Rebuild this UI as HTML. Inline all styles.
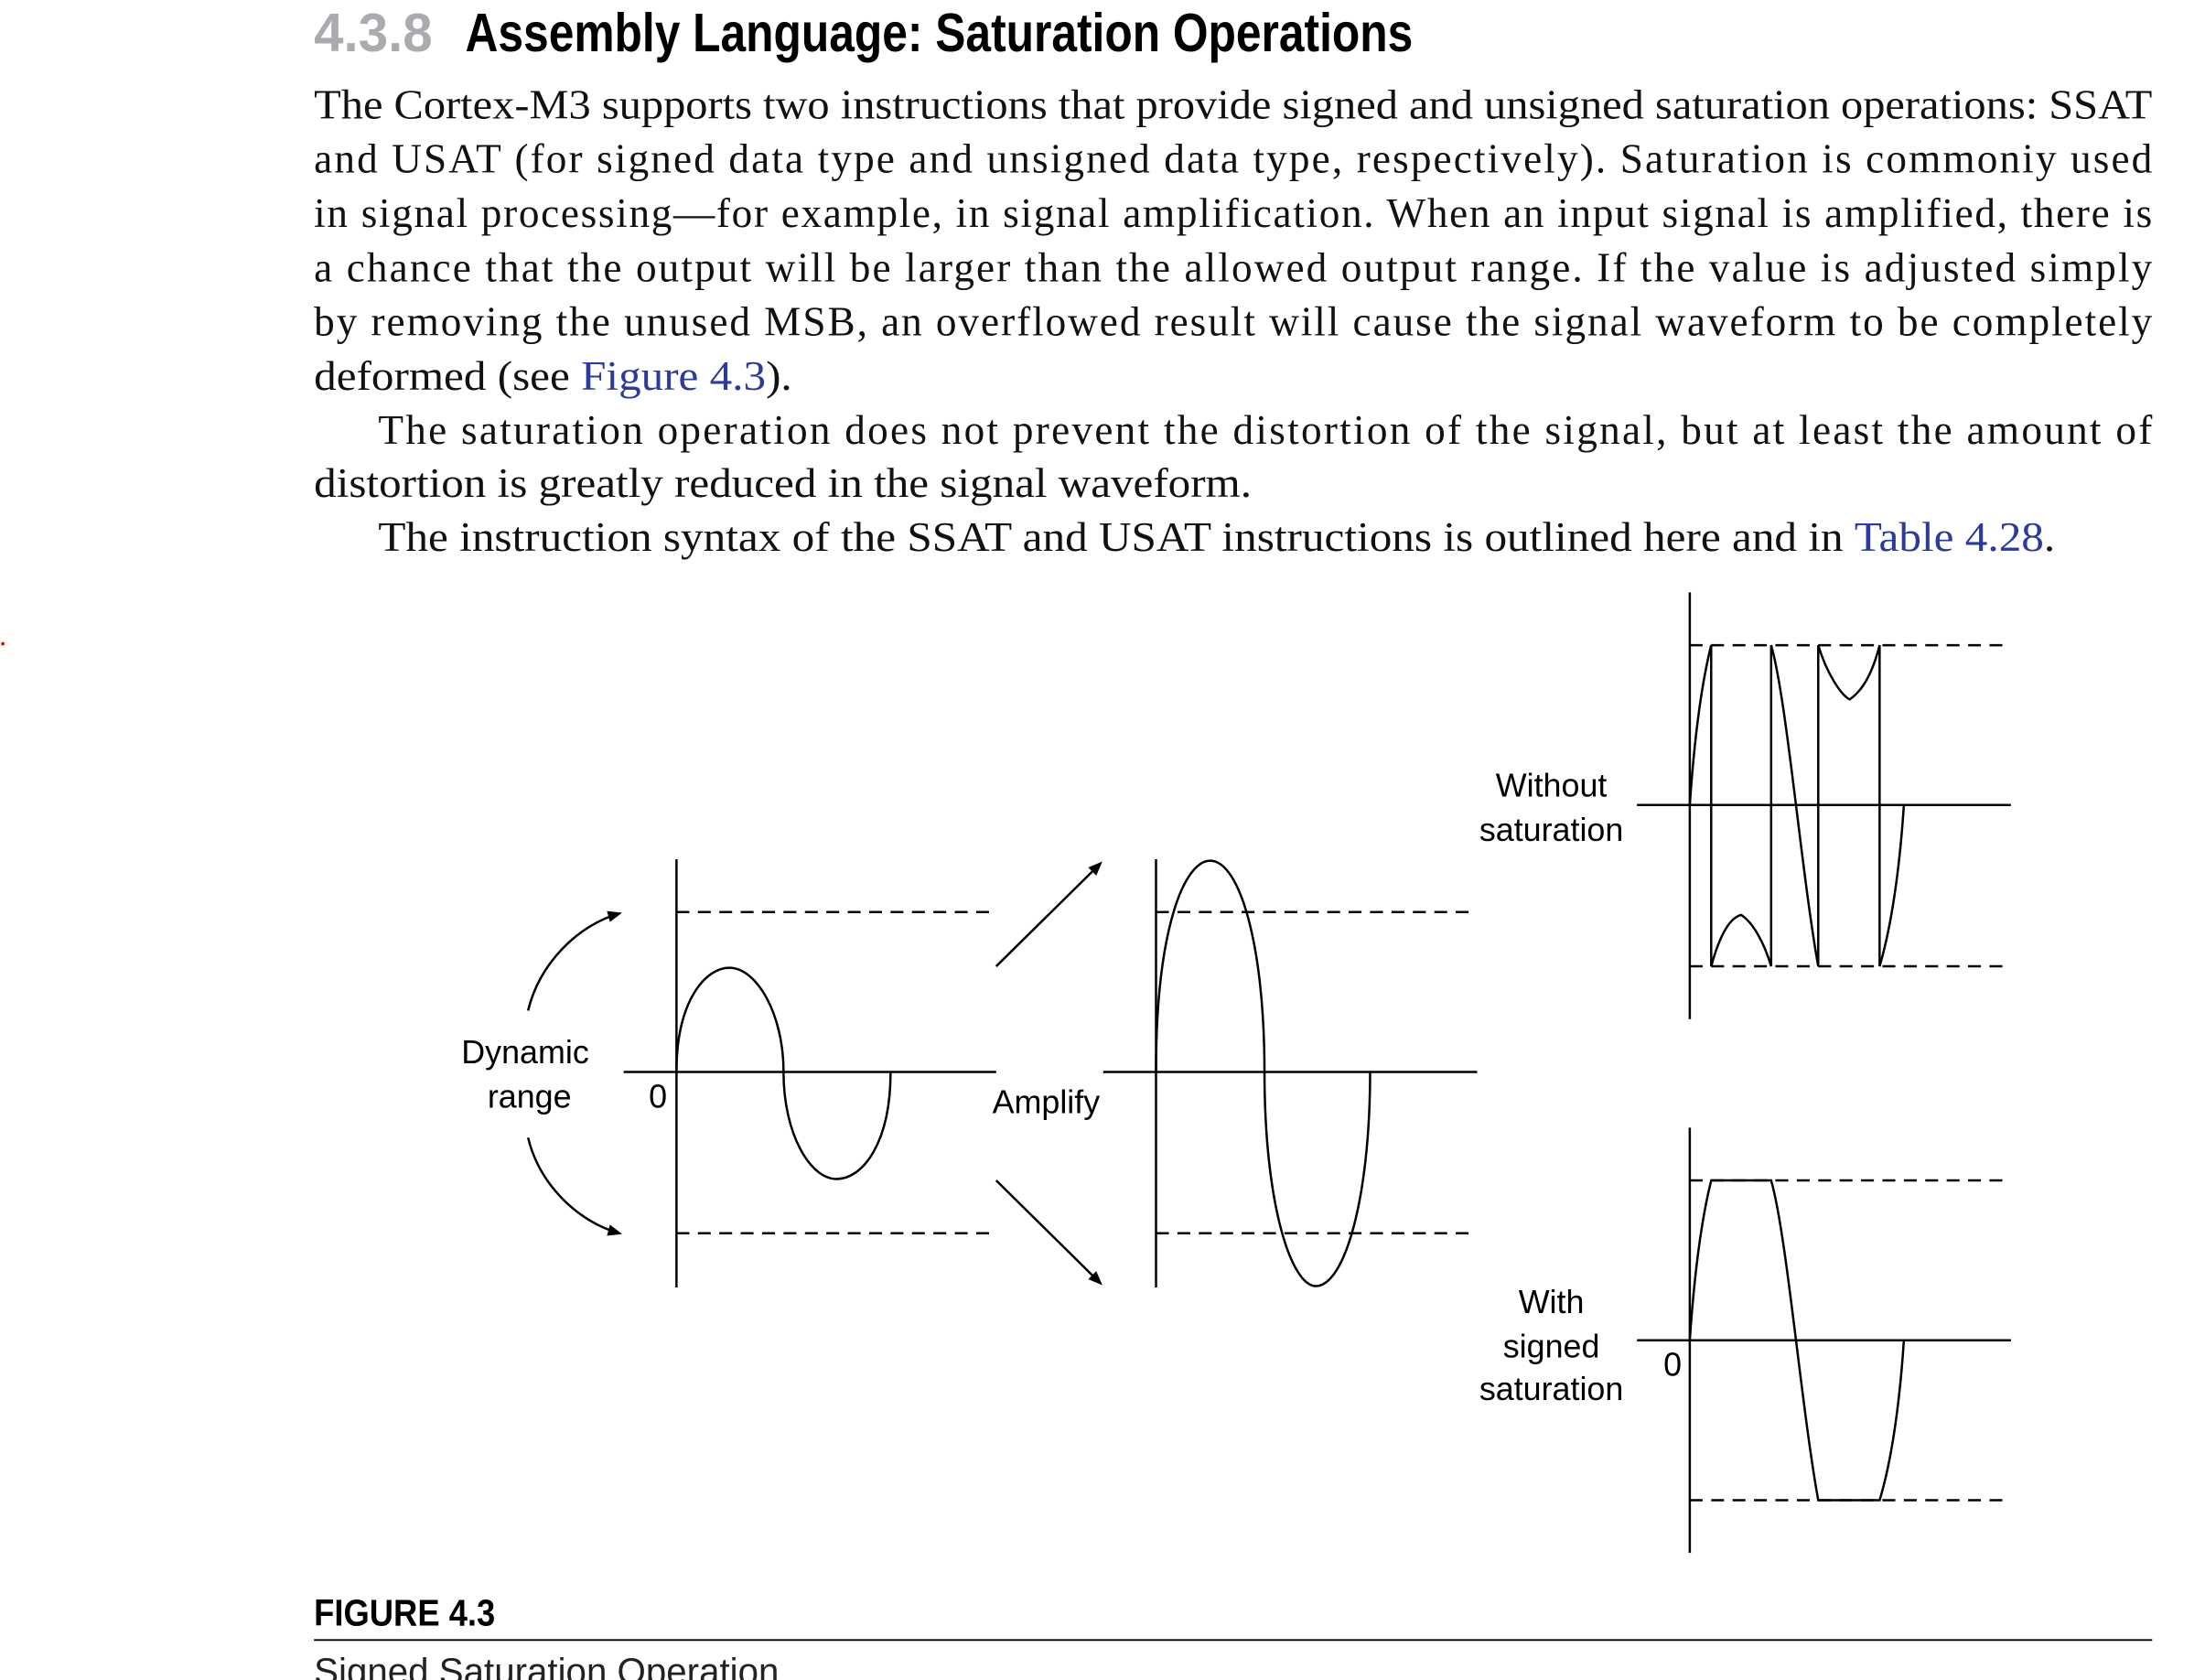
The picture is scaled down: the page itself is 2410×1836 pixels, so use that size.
<!DOCTYPE html>
<html><head><meta charset="utf-8"><style>html,body{margin:0;padding:0;background:#fff;width:2410px;height:1836px;overflow:hidden}</style></head>
<body>
<svg width="2410" height="1836" viewBox="0 0 1545 1177" preserveAspectRatio="none" xmlns="http://www.w3.org/2000/svg">
<g font-family="'Liberation Sans Narrow','Liberation Sans',sans-serif" font-weight="bold">
<text x="220" y="36" font-size="38" fill="#a9abae" textLength="83" lengthAdjust="spacingAndGlyphs">4.3.8</text>
<text x="326" y="36" font-size="38" fill="#000" textLength="664" lengthAdjust="spacingAndGlyphs">Assembly Language: Saturation Operations</text>
</g>
<g font-family="'Liberation Serif',serif" font-size="29" fill="#111">
<text x="220" y="83" textLength="1288" lengthAdjust="spacingAndGlyphs">The Cortex-M3 supports two instructions that provide signed and unsigned saturation operations: SSAT</text>
<text x="220" y="121" textLength="1288" lengthAdjust="spacing">and USAT (for signed data type and unsigned data type, respectively). Saturation is commoniy used</text>
<text x="220" y="159" textLength="1288" lengthAdjust="spacing">in signal processing—for example, in signal amplification. When an input signal is amplified, there is</text>
<text x="220" y="197" textLength="1288" lengthAdjust="spacing">a chance that the output will be larger than the allowed output range. If the value is adjusted simply</text>
<text x="220" y="235" textLength="1288" lengthAdjust="spacing">by removing the unused MSB, an overflowed result will cause the signal waveform to be completely</text>
<text x="220" y="273" textLength="335" lengthAdjust="spacingAndGlyphs">deformed (see <tspan fill="#2b3a9f">Figure 4.3</tspan>).</text>
<text x="265" y="311" textLength="1243" lengthAdjust="spacing">The saturation operation does not prevent the distortion of the signal, but at least the amount of</text>
<text x="220" y="348" textLength="657" lengthAdjust="spacingAndGlyphs">distortion is greatly reduced in the signal waveform.</text>
<text x="265" y="386" textLength="1175" lengthAdjust="spacingAndGlyphs">The instruction syntax of the SSAT and USAT instructions is outlined here and in <tspan fill="#2b3a9f">Table 4.28</tspan>.</text>
</g>
<circle cx="2" cy="451" r="1.2" fill="#e00"/>
<defs><marker id="ah" markerWidth="10" markerHeight="10" refX="8" refY="5" orient="auto" markerUnits="userSpaceOnUse"><path d="M0,1 L10,5 L0,9 Z" fill="#000"/></marker></defs>
<g stroke="#000" stroke-width="1.6" fill="none">
<!-- left -->
<line x1="474" y1="602" x2="474" y2="902"/><line x1="437" y1="751" x2="698" y2="751"/>
<line x1="474" y1="639" x2="698" y2="639" stroke-dasharray="9,6"/><line x1="474" y1="864" x2="698" y2="864" stroke-dasharray="9,6"/>
<path d="M474,751 C474,700 495,678 511,678 C530,678 549,710 549,751 C549,795 568,826 586,826 C605,826 624,800 624,751"/>
<path d="M370,708 C378,675 405,648 434,640" marker-end="url(#ah)"/>
<path d="M370,797 C378,830 405,856 434,864" marker-end="url(#ah)"/>
<line x1="698" y1="677" x2="771" y2="605" marker-end="url(#ah)"/>
<line x1="698" y1="827" x2="771" y2="899" marker-end="url(#ah)"/>
<!-- middle -->
<line x1="810" y1="602" x2="810" y2="902"/><line x1="773" y1="751" x2="1035" y2="751"/>
<line x1="810" y1="639" x2="1035" y2="639" stroke-dasharray="9,6"/><line x1="810" y1="864" x2="1035" y2="864" stroke-dasharray="9,6"/>
<path d="M810,751 C810,650 830,603 848,603 C868,603 886,660 886,751 C886,845 905,901 922,901 C942,901 960,840 960,751"/>
<!-- top right -->
<line x1="1184" y1="415" x2="1184" y2="714"/><line x1="1147" y1="564" x2="1409" y2="564"/>
<line x1="1184" y1="452" x2="1409" y2="452" stroke-dasharray="9,6"/><line x1="1184" y1="677" x2="1409" y2="677" stroke-dasharray="9,6"/>
<path d="M1184,564 C1187,520 1192,480 1199,452 L1199,677 C1205,655 1212,643 1220,641 C1228,646 1236,660 1241,677 L1241,452 C1252,490 1262,610 1274,677 L1274,452 C1280,472 1290,487 1296,490 C1305,484 1312,472 1317,452 L1317,677 C1325,650 1331,610 1334,564"/>
<!-- bottom right -->
<line x1="1184" y1="790" x2="1184" y2="1088"/><line x1="1147" y1="939" x2="1409" y2="939"/>
<line x1="1184" y1="827" x2="1409" y2="827" stroke-dasharray="9,6"/><line x1="1184" y1="1051" x2="1409" y2="1051" stroke-dasharray="9,6"/>
<path d="M1184,939 C1187,895 1192,855 1199,827 L1241,827 C1252,865 1262,985 1274,1051 L1317,1051 C1325,1025 1331,985 1334,939"/>
<line x1="220" y1="1149" x2="1508" y2="1149" stroke-width="1.2"/>
</g>
<g font-family="'Liberation Sans',sans-serif" font-size="23" fill="#000" text-anchor="middle">
<text x="368" y="745">Dynamic</text><text x="371" y="776">range</text>
<text x="461" y="776">0</text>
<text x="733" y="780">Amplify</text>
<text x="1087" y="558">Without</text><text x="1087" y="589">saturation</text>
<text x="1087" y="920">With</text><text x="1087" y="951">signed</text><text x="1087" y="981">saturation</text>
<text x="1172" y="964">0</text>
</g>
<text x="220" y="1139" font-family="'Liberation Sans Narrow','Liberation Sans',sans-serif" font-weight="bold" font-size="26" textLength="127" lengthAdjust="spacingAndGlyphs">FIGURE 4.3</text>
<text x="220" y="1180" font-family="'Liberation Sans Narrow','Liberation Sans',sans-serif" font-size="26" fill="#222" textLength="333" lengthAdjust="spacingAndGlyphs">Signed Saturation Operation.</text>
</svg>
</body></html>
